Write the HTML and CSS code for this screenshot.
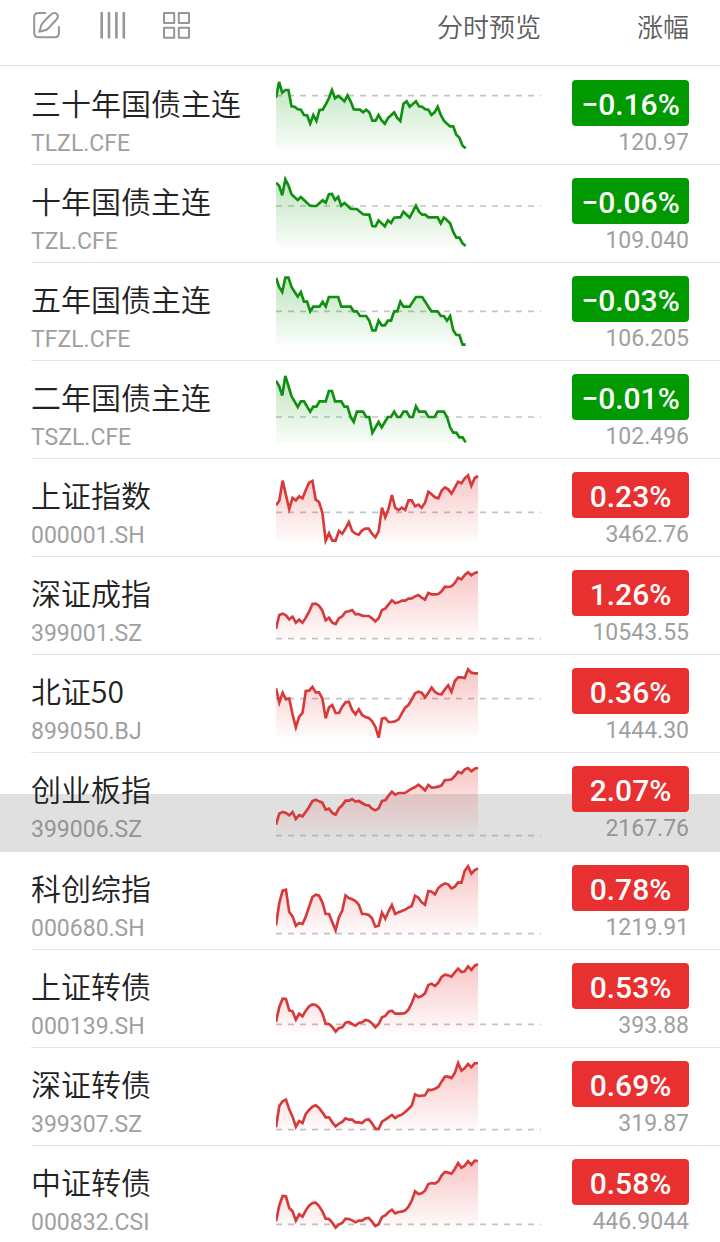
FILE: index.html
```html
<!DOCTYPE html>
<html lang="zh-CN">
<head>
    <meta charset="UTF-8">
    <meta name="viewport" content="width=device-width, initial-scale=1.0">
    <title>自选行情</title>
    <link rel="stylesheet" href="styles.css">
</head>
<body>

    <!-- gradients shared by all charts -->
    <svg class="defs" width="0" height="0" aria-hidden="true">
        <defs>
            <linearGradient id="fill-down" gradientUnits="userSpaceOnUse" x1="0" y1="40" x2="0" y2="246">
                <stop offset="0" stop-color="#009900" stop-opacity="0.26"/>
                <stop offset="1" stop-color="#009900" stop-opacity="0.02"/>
            </linearGradient>
            <linearGradient id="fill-up" gradientUnits="userSpaceOnUse" x1="0" y1="40" x2="0" y2="246">
                <stop offset="0" stop-color="#e83030" stop-opacity="0.28"/>
                <stop offset="1" stop-color="#e83030" stop-opacity="0.02"/>
            </linearGradient>
        </defs>
    </svg>

    <table class="quotes">
        <colgroup>
            <col>
            <col class="col-chart">
            <col class="col-change">
        </colgroup>
        <thead>
            <tr>
                <th>
                    <div class="toolbar">
                        <button type="button" aria-label="编辑">
                            <svg viewBox="0 0 28 28">
                                <path d="M12.3 1.9H5.5Q1.2 1.9 1.2 6.2V22Q1.2 26.3 5.5 26.3H21.5Q25.9 26.3 25.9 22V16"/>
                                <path d="M6.3 20.8L8.3 14.2C9.5 11.5 15.5 5.8 18 3.5C20 1.6 23 1.4 24.2 3.2C25.4 5 24.8 7 23.3 8.7L15.6 17Q14 18.8 12 19.3Z"/>
                            </svg>
                        </button>
                        <button type="button" aria-label="列设置">
                            <svg viewBox="0 0 28 28" class="bars">
                                <path d="M3.7 1V27.5M11 1V27.5M18.4 1V27.5M25.8 1V27.5"/>
                            </svg>
                        </button>
                        <button type="button" aria-label="宫格">
                            <svg viewBox="0 0 28 28">
                                <rect x="1" y="2" width="10.2" height="10"/>
                                <rect x="15.8" y="2" width="10.2" height="10"/>
                                <rect x="1" y="16.7" width="10.2" height="10"/>
                                <rect x="15.8" y="16.7" width="10.2" height="10"/>
                            </svg>
                        </button>
                    </div>
                </th>
                <th class="head-text">分时预览</th>
                <th class="head-text head-change">涨幅</th>
            </tr>
        </thead>
        <tbody id="quote-list"></tbody>
    </table>

    <script src="quotes.js"></script>
</body>
</html>
```
FILE: styles.css
```css
body {
    font-family: Roboto, "Noto Sans CJK SC", sans-serif;
    margin: 0;
    background-color: #fff;
    color: #222;
}
.defs {
    position: absolute;
}
.quotes {
    width: 100%;
    table-layout: fixed;
    border-collapse: collapse;
}
.col-chart {
    width: 265px;
}
.col-change {
    width: 179px;
}
th,
td {
    padding: 0;
    vertical-align: top;
}

/* header */
thead th {
    height: 67px;
    font-weight: 400;
}
thead tr {
    background: linear-gradient(#e4e4e4, #e4e4e4) left 65px / 100% 1px no-repeat;
}
.toolbar {
    display: flex;
    gap: 37px;
    padding: 11px 0 0 33px;
}
.toolbar button {
    width: 28px;
    height: 28px;
    padding: 0;
    border: none;
    background: none;
    cursor: pointer;
}
.toolbar svg {
    display: block;
    width: 28px;
    height: 28px;
    fill: none;
    stroke: #969696;
    stroke-width: 2;
    stroke-linecap: round;
    stroke-linejoin: round;
}
.toolbar .bars {
    stroke-width: 2.6;
    stroke-linecap: butt;
}
thead .head-text {
    padding-top: 8px;
    height: 59px;
    text-align: right;
    font-size: 26px;
    font-weight: 350;
    line-height: 40px;
    color: #5c5c5c;
}
thead .head-change {
    padding-right: 31px;
}

/* rows, the divider starts at the text edge */
.quote {
    height: 98px;
    background: linear-gradient(#e4e4e4, #e4e4e4) 31px bottom / 100% 1px no-repeat;
}
.quote:last-child {
    background: none;
}
.quote.pressed {
    height: 99px;
    background: linear-gradient(#e0e0e0, #e0e0e0) left 41px / 100% 100% no-repeat;
}
.quote td {
    padding-top: 13px;
}
.quote .name-cell {
    padding-left: 31px;
}
.name {
    margin: 0;
    font-family: "Noto Sans CJK SC", sans-serif;
    font-size: 30px;
    font-weight: 350;
    line-height: 44px;
}
.code {
    margin: 0;
    padding-top: 7px;
    font-size: 23px;
    line-height: 26px;
    color: #a0a0a0;
}
.quote .chart-cell {
    padding-top: 0;
}
.chart {
    display: block;
    width: 100%;
    height: 97px;
}
.chart .line {
    fill: none;
    stroke-width: 8;
    stroke-linejoin: miter;
}
.chart .base {
    stroke: #c4c4c4;
    stroke-width: 5;
    stroke-dasharray: 18 18;
}
.pressed .base {
    stroke: #b4b4b4;
}
.pressed .code,
.pressed .price {
    color: #949494;
}
.down .line {
    stroke: #109010;
}
.down .area {
    fill: url(#fill-down);
}
.up .line {
    stroke: #d63a3a;
}
.up .area {
    fill: url(#fill-up);
}
.quote .change-cell {
    padding-left: 31px;
    padding-right: 31px;
    text-align: right;
}
.change {
    height: 46px;
    border-radius: 4px;
    font-size: 30px;
    font-weight: 500;
    line-height: 50px;
    text-align: center;
    color: #fff;
}
.down .change {
    background-color: #009900;
}
.up .change {
    background-color: #e83030;
}
.price {
    margin-top: 4px;
    font-size: 23px;
    line-height: 26px;
    color: #a0a0a0;
}
```
FILE: quotes.js
```js
// line: evenly spaced samples, base: previous close, both in viewBox units from the top
const quotes = [
    { name: "三十年国债主连", code: "TLZL.CFE", change: "−0.16%", price: "120.97", base: 86,
      line: [92,45,77,69,69,118,119,127,128,144,145,170,144,162,129,128,112,94,69,94,87,94,103,85,103,127,128,128,136,128,136,161,161,144,160,170,153,145,136,153,162,110,103,119,111,103,118,119,127,128,144,136,119,144,161,170,178,178,203,212,236,244] },
    { name: "十年国债主连", code: "TZL.CFE", change: "−0.06%", price: "109.040", base: 123,
      line: [53,62,91,43,61,88,97,105,96,105,114,122,123,123,114,106,113,88,87,105,96,122,114,122,131,132,132,140,148,149,149,183,184,166,175,184,166,174,158,157,157,140,149,158,140,122,140,149,149,157,157,157,157,175,158,166,175,201,218,218,235,243] },
    { name: "五年国债主连", code: "TFZL.CFE", change: "−0.03%", price: "106.205", base: 145,
      line: [44,72,87,44,44,72,87,101,87,116,116,145,131,131,131,116,131,102,102,102,102,131,131,131,131,145,145,159,159,159,173,202,202,173,187,187,173,173,145,145,116,131,131,131,116,102,102,102,116,131,145,145,145,159,159,173,159,202,216,216,245,245] },
    { name: "二年国债主连", code: "TSZL.CFE", change: "−0.01%", price: "102.496", base: 168,
      line: [59,75,104,45,75,106,122,138,121,121,137,152,137,137,121,121,121,90,90,121,121,121,137,137,168,183,152,152,152,168,168,215,199,183,199,183,168,168,152,168,168,152,152,168,168,136,152,152,152,168,168,168,152,152,152,168,199,215,215,229,229,244] },
    { name: "上证指数", code: "000001.SH", change: "0.23%", price: "3462.76", base: 160,
      line: [139,125,65,108,150,117,124,112,118,93,71,66,122,129,161,245,223,245,245,216,224,208,189,216,224,227,214,209,209,224,235,217,146,175,149,108,146,153,146,153,124,124,142,137,146,131,98,106,115,118,95,85,91,104,86,68,73,58,49,80,57,51] },
    { name: "深证成指", code: "399001.SZ", change: "1.26%", price: "10543.55", base: 245,
      line: [215,174,170,175,187,179,197,188,197,182,164,141,140,146,161,190,182,197,201,184,178,165,163,159,172,171,176,177,177,184,193,184,159,155,142,130,138,136,131,131,125,124,118,114,122,128,108,112,112,111,103,89,90,88,78,62,67,54,46,55,48,45] },
    { name: "北证50", code: "899050.BJ", change: "0.36%", price: "1444.30", base: 131,
      line: [100,143,113,133,130,178,217,185,174,108,107,96,112,112,130,190,157,150,174,174,155,142,140,165,178,163,180,186,189,198,215,248,191,189,201,201,199,193,175,158,150,133,115,110,113,127,113,98,111,117,118,103,91,110,78,67,67,69,43,53,55,55] },
    { name: "创业板指", code: "399006.SZ", change: "2.07%", price: "2167.76", base: 248, pressed: true,
      line: [215,182,177,180,187,177,198,186,190,176,162,144,140,145,149,170,167,180,185,166,157,143,143,138,146,144,150,156,157,167,172,166,144,142,128,116,125,120,120,120,113,107,102,95,103,112,96,104,103,101,97,81,81,79,69,56,61,49,45,55,47,44] },
    { name: "科创综指", code: "000680.SH", change: "0.78%", price: "1219.91", base: 245,
      line: [220,153,116,113,180,193,221,213,216,194,164,135,128,131,151,186,186,211,235,196,176,130,138,142,147,158,186,186,189,199,224,221,182,200,177,159,186,181,177,173,167,162,131,137,151,158,117,119,127,108,100,94,97,109,104,91,92,56,43,65,54,49] },
    { name: "上证转债", code: "000139.SH", change: "0.53%", price: "393.88", base: 223,
      line: [216,171,146,147,181,184,209,191,199,182,169,163,165,173,190,221,222,231,245,234,232,218,216,222,227,219,217,210,212,220,232,222,202,198,185,182,191,191,191,189,179,159,134,142,138,130,105,101,108,98,81,74,76,80,67,56,66,64,49,60,47,43] },
    { name: "深证转债", code: "399307.SZ", change: "0.69%", price: "319.87", base: 245,
      line: [238,174,160,155,184,206,236,219,225,198,186,176,172,180,193,208,208,223,235,227,222,211,215,215,223,223,225,216,214,226,242,243,221,215,208,201,210,203,200,192,183,173,139,144,143,142,125,126,122,117,101,86,86,90,75,45,68,60,48,58,46,45] },
    { name: "中证转债", code: "000832.CSI", change: "0.58%", price: "446.9044", base: 235,
      line: [226,178,150,151,186,196,224,205,212,193,179,171,170,180,196,218,219,230,245,235,231,218,219,223,229,224,224,217,216,227,240,235,213,208,198,191,202,198,197,193,182,164,136,144,142,134,114,111,113,106,89,78,80,83,69,51,65,59,46,56,44,45] },
];

const BOTTOM = 246;

function renderChart(quote, down) {
    const width = down ? 569 : 606;
    const step = width / (quote.line.length - 1);
    const points = quote.line.map((y, i) => `${(i * step).toFixed(1)},${y}`).join(' ');
    return `
        <svg class="chart" viewBox="0 0 795 291" preserveAspectRatio="none">
            <line class="base" x1="0" y1="${quote.base}" x2="795" y2="${quote.base}"/>
            <polygon class="area" points="0,${BOTTOM} ${points} ${width},${BOTTOM}"/>
            <polyline class="line" points="${points}"/>
        </svg>`;
}

function renderQuotes() {
    const list = document.getElementById('quote-list');
    quotes.forEach(quote => {
        const down = quote.change.startsWith('−');
        const row = document.createElement('tr');
        row.className = `quote ${down ? 'down' : 'up'}${quote.pressed ? ' pressed' : ''}`;
        row.innerHTML = `
            <td class="name-cell">
                <p class="name">${quote.name}</p>
                <p class="code">${quote.code}</p>
            </td>
            <td class="chart-cell">${renderChart(quote, down)}</td>
            <td class="change-cell">
                <div class="change">${quote.change}</div>
                <div class="price">${quote.price}</div>
            </td>
        `;
        list.appendChild(row);
    });
}

renderQuotes();
```
